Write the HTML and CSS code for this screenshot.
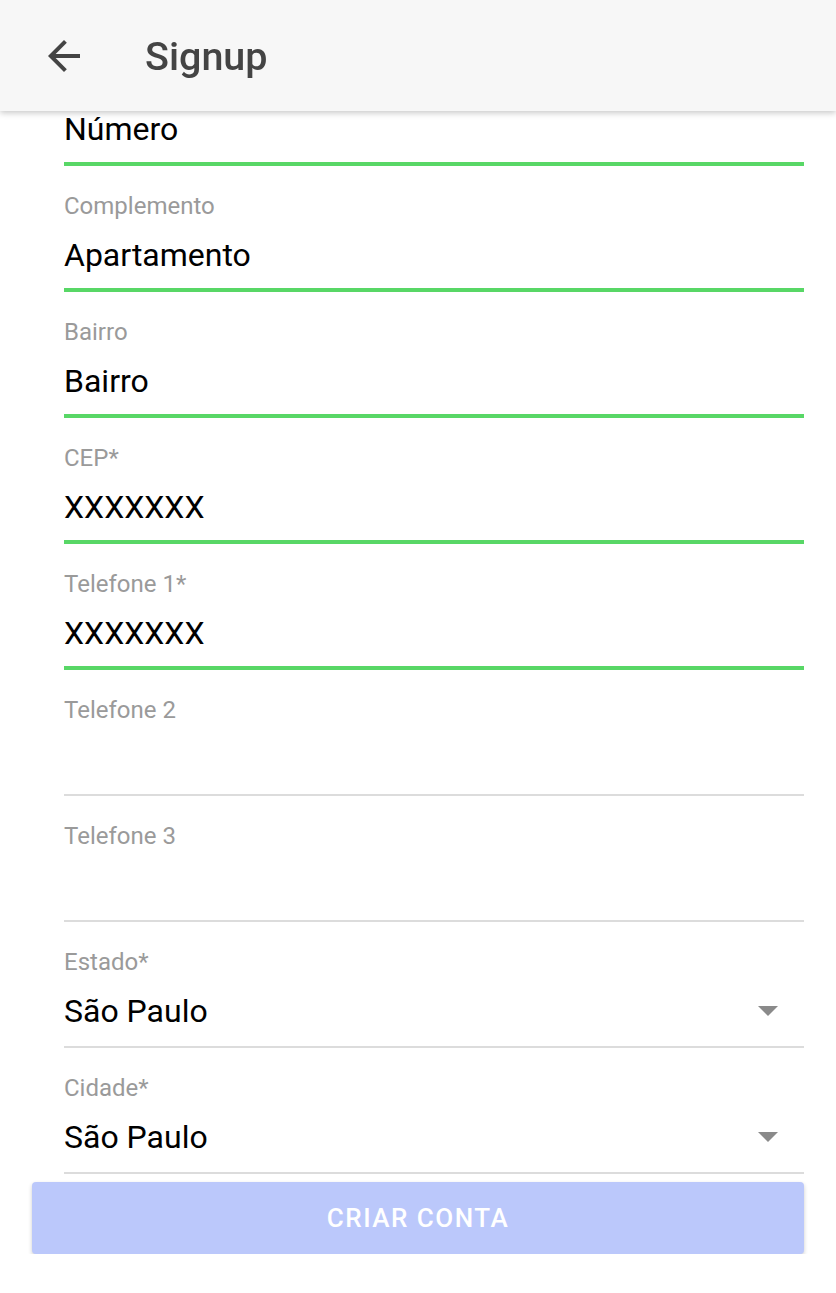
FILE: index.html
```html
<!DOCTYPE html>
<html lang="pt">
<head>
<meta charset="utf-8">
<title>Signup</title>
<link rel="stylesheet" href="styles.css">
</head>
<body>
<header class="appbar">
  <button class="back" aria-label="Voltar">
    <svg width="48" height="48" viewBox="0 0 24 24"><path d="M20 11H7.83l5.59-5.59L12 4l-8 8 8 8 1.41-1.41L7.83 13H20v-2z" fill="#444"/></svg>
  </button>
  <h1 class="title">Signup</h1>
</header>
<main class="form">
  <div class="field filled">
    <div class="label">Número</div>
    <div class="value">Número</div>
    <div class="line"></div>
  </div>
  <div class="field filled">
    <div class="label">Complemento</div>
    <div class="value">Apartamento</div>
    <div class="line"></div>
  </div>
  <div class="field filled">
    <div class="label">Bairro</div>
    <div class="value">Bairro</div>
    <div class="line"></div>
  </div>
  <div class="field filled">
    <div class="label">CEP*</div>
    <div class="value">XXXXXXX</div>
    <div class="line"></div>
  </div>
  <div class="field filled">
    <div class="label">Telefone 1*</div>
    <div class="value">XXXXXXX</div>
    <div class="line"></div>
  </div>
  <div class="field">
    <div class="label">Telefone 2</div>
    <div class="value"></div>
    <div class="line"></div>
  </div>
  <div class="field">
    <div class="label">Telefone 3</div>
    <div class="value"></div>
    <div class="line"></div>
  </div>
  <div class="field select">
    <div class="label">Estado*</div>
    <div class="value"><span>São Paulo</span><span class="caret"></span></div>
    <div class="line"></div>
  </div>
  <div class="field select">
    <div class="label">Cidade*</div>
    <div class="value"><span>São Paulo</span><span class="caret"></span></div>
    <div class="line"></div>
  </div>
  <div class="actions">
    <button class="submit">CRIAR CONTA</button>
  </div>
</main>
</body>
</html>
```
FILE: styles.css
```css
html, body {
  margin: 0;
  padding: 0;
  background: #ffffff;
  font-family: Roboto, "Liberation Sans", sans-serif;
  overflow: hidden;
}

.appbar {
  position: fixed;
  top: 0;
  left: 0;
  right: 0;
  height: 111px;
  background: #f7f7f7;
  box-shadow: 0 2px 6px rgba(0, 0, 0, 0.22);
  display: flex;
  align-items: center;
  z-index: 2;
}

.back {
  margin-left: 40px;
  width: 48px;
  height: 48px;
  padding: 0;
  border: 0;
  background: none;
  display: flex;
}

.title {
  margin: 2px 0 0 57px;
  font-size: 39.5px;
  font-weight: 500;
  color: #444444;
  line-height: 44px;
}

.form {
  padding: 40px 32px 0 32px;
  display: flex;
  flex-direction: column;
}

.field {
  height: 126px;
  margin-left: 32px;
  display: flex;
  flex-direction: column;
}

.label {
  margin-top: 26px;
  font-size: 24px;
  line-height: 28px;
  color: #9a9a9a;
}

.value {
  margin-top: 17px;
  height: 36px;
  font-size: 32px;
  line-height: 36px;
  color: #000000;
  display: flex;
  align-items: center;
  justify-content: space-between;
}

.line {
  margin-top: auto;
  height: 2px;
  background: #dcdcdc;
}

.filled .line {
  height: 4px;
  background: #58d766;
}

.caret {
  width: 0;
  height: 0;
  margin-right: 26px;
  margin-top: 0;
  border-left: 10px solid transparent;
  border-right: 10px solid transparent;
  border-top: 10px solid #8a8a8a;
}

.actions {
  margin-top: 8px;
  display: flex;
}

.submit {
  flex: 1;
  height: 72px;
  border: 0;
  border-radius: 4px;
  background: #bbc8fb;
  color: #ffffff;
  font-family: Roboto, "Liberation Sans", sans-serif;
  font-size: 26px;
  font-weight: 500;
  letter-spacing: 1.5px;
  box-shadow: 0 2px 4px rgba(0, 0, 0, 0.2);
  padding: 0;
}
```
